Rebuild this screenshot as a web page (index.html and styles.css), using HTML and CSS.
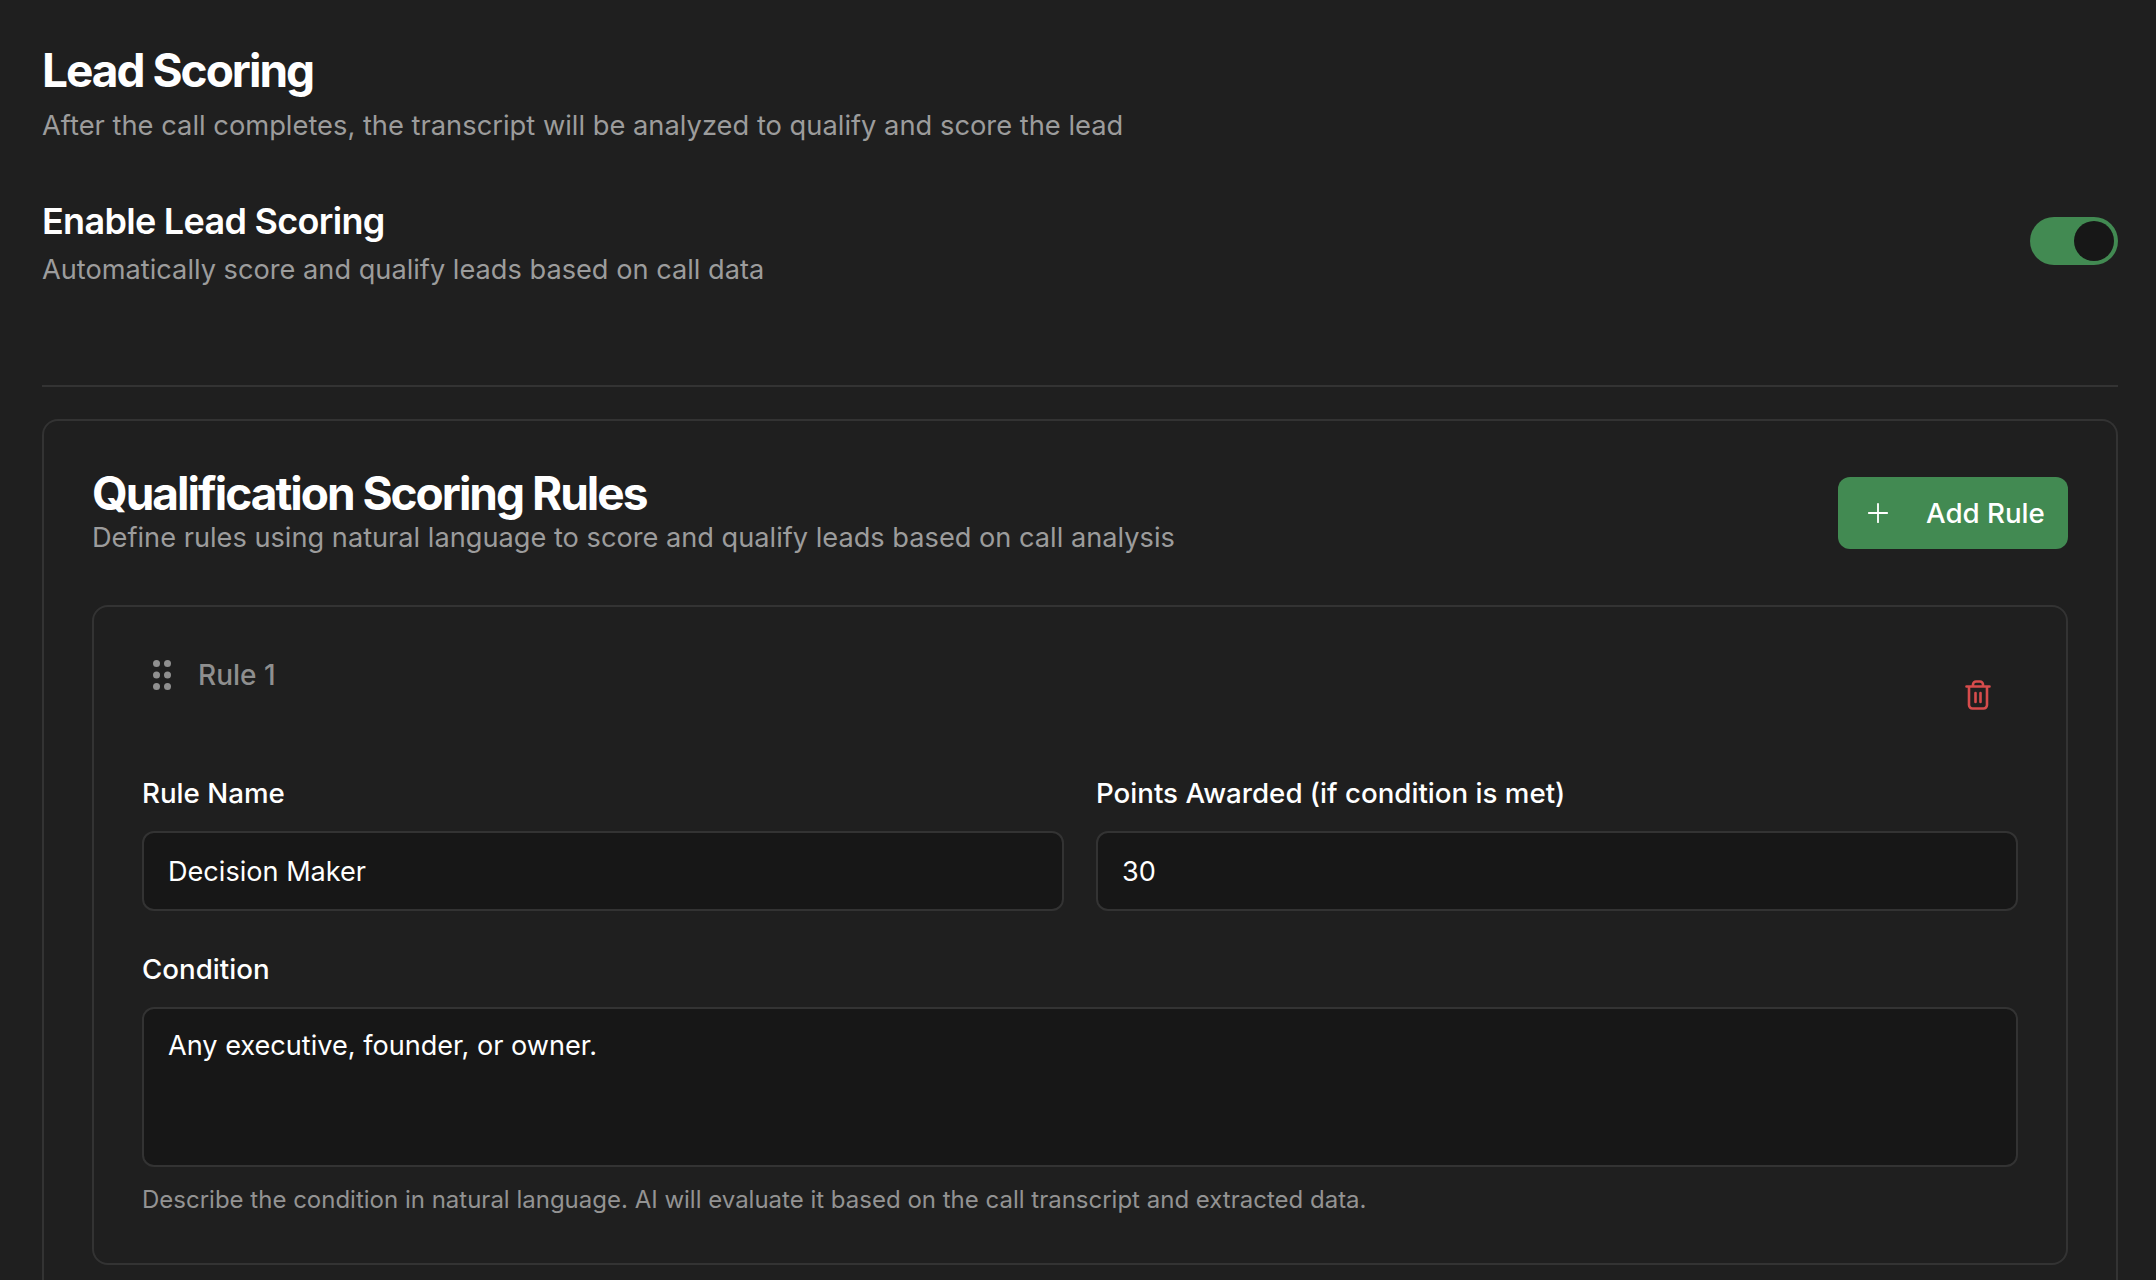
FILE: index.html
```html
<!DOCTYPE html>
<html lang="en">
<head>
<meta charset="utf-8">
<title>Lead Scoring</title>
<link rel="stylesheet" href="styles.css">
</head>
<body>
<main class="page">
  <header class="intro">
    <h1 class="title">Lead Scoring</h1>
    <p class="muted">After the call completes, the transcript will be analyzed to qualify and score the lead</p>
  </header>
  <section class="enable">
    <div>
      <h2 class="enable-title">Enable Lead Scoring</h2>
      <p class="muted">Automatically score and qualify leads based on call data</p>
    </div>
    <div class="toggle"><span class="thumb"></span></div>
  </section>
  <hr class="divider">
  <section class="card">
    <div class="card-head">
      <div class="card-text">
        <h2 class="title">Qualification Scoring Rules</h2>
        <p class="muted card-sub">Define rules using natural language to score and qualify leads based on call analysis</p>
      </div>
      <button class="add-btn">
        <svg class="plus" viewBox="0 0 24 24" fill="none" stroke="currentColor" stroke-width="2" stroke-linecap="round"><path d="M12 2v20M2 12h20"/></svg>
        <span>Add Rule</span>
      </button>
    </div>
    <article class="rule">
      <div class="rule-head">
        <div class="rule-id">
          <svg class="grip" viewBox="0 0 18 30" fill="currentColor"><circle cx="3.5" cy="3.5" r="3.5"/><circle cx="14.5" cy="3.5" r="3.5"/><circle cx="3.5" cy="15" r="3.5"/><circle cx="14.5" cy="15" r="3.5"/><circle cx="3.5" cy="26.5" r="3.5"/><circle cx="14.5" cy="26.5" r="3.5"/></svg>
          <span>Rule 1</span>
        </div>
        <svg class="trash" viewBox="0 0 26 30" fill="none" stroke="currentColor" stroke-width="2.6" stroke-linecap="round" stroke-linejoin="round"><path d="M1.5 6.5h23M4 6.5V25a3.5 3.5 0 0 0 3.5 3.5h11A3.5 3.5 0 0 0 22 25V6.5M8 6.5V4.5a3 3 0 0 1 3-3h4a3 3 0 0 1 3 3v2M10.5 13v9M15.5 13v9"/></svg>
      </div>
      <div class="fields">
        <label class="field">
          <span class="label">Rule Name</span>
          <input class="input" value="Decision Maker">
        </label>
        <label class="field">
          <span class="label">Points Awarded (if condition is met)</span>
          <input class="input" value="30">
        </label>
      </div>
      <label class="field condition">
        <span class="label">Condition</span>
        <textarea class="input area">Any executive, founder, or owner.</textarea>
      </label>
      <p class="help">Describe the condition in natural language. AI will evaluate it based on the call transcript and extracted data.</p>
    </article>
  </section>
</main>
</body>
</html>
```
FILE: styles.css
```css
* { box-sizing: border-box; }
html, body { margin: 0; height: 1280px; overflow: hidden; background: #1f1f1f; }
body { font-family: Inter, "Noto Sans", sans-serif; color: #fff; }
.page { padding: 44px 38px 0 42px; }
h1, h2, p { margin: 0; }
.title { font-size: 46px; line-height: 52px; font-weight: 700; letter-spacing: -2px; }
.muted { font-size: 27.2px; line-height: 40px; color: #9c9c9c; }
.intro .muted { margin-top: 10px; font-size: 27.3px; }
.enable { display: flex; justify-content: space-between; align-items: flex-start; margin-top: 53px; }
.enable-title { font-size: 36px; line-height: 44px; font-weight: 600; letter-spacing: -.7px; }
.enable .muted { margin-top: 7px; }
.toggle { width: 88px; height: 48px; margin-top: 18px; border-radius: 24px; background: #428a52; display: flex; justify-content: flex-end; align-items: center; padding-right: 4px; }
.thumb { width: 40px; height: 40px; border-radius: 50%; background: #171717; }
.divider { border: 0; height: 2px; background: #333; margin: 95px 0 32px; }
.card { border: 2px solid #333; border-bottom: 0; border-radius: 16px 16px 0 0; padding: 48px; }
.card-head { display: flex; justify-content: space-between; align-items: flex-start; }
.card-text { margin-top: -2px; }
.card-sub { margin-top: -1px; }
.add-btn { width: 230px; height: 72px; margin-top: 8px; border: 0; border-radius: 12px; background: #428a52; color: #fff; font: 500 27.7px Inter, sans-serif; white-space: nowrap; display: flex; align-items: center; gap: 37px; padding: 0 24px 0 29px; }
.plus { width: 22px; height: 22px; flex: none; }
.rule { border: 2px solid #333; border-radius: 16px; padding: 48px; height: 660px; margin-top: 47px; }
.rule-head { display: flex; justify-content: space-between; height: 118px; }
.rule-id { display: flex; align-items: flex-start; gap: 27px; padding-left: 11px; font-size: 28px; line-height: 40px; font-weight: 500; color: #8f8f8f; }
.grip { width: 18px; height: 30px; margin-top: 5px; }
.trash { width: 26px; height: 30px; margin: 25px 27px 0 0; color: #d64c4c; }
.fields { display: grid; grid-template-columns: 1fr 1fr; gap: 32px; }
.field { display: flex; flex-direction: column; gap: 18px; }
.label { font-size: 27.7px; line-height: 40px; font-weight: 500; }
.input { width: 100%; height: 80px; border: 2px solid #333; border-radius: 12px; background: #171717; color: #fff; font: 400 27.1px/40px Inter, sans-serif; padding: 1px 24px 0; outline: 0; }
.area { height: 160px; padding-top: 17px; resize: none; display: block; }
.condition { margin-top: 38px; }
.help { margin-top: 15px; font-size: 24px; line-height: 36px; color: #939393; }
```
